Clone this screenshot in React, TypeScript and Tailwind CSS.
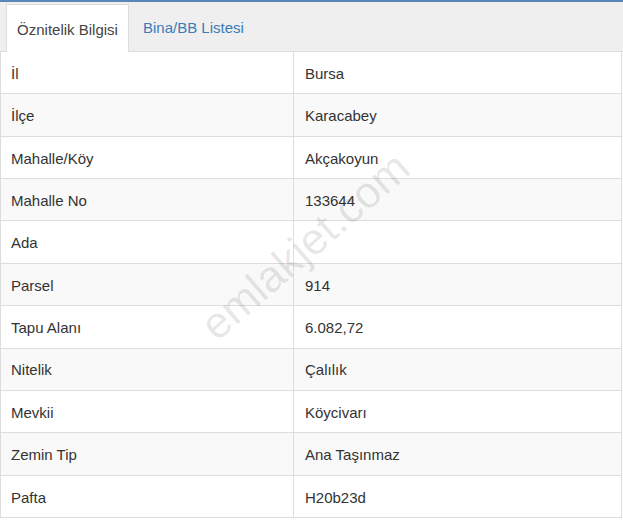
import React from 'react';

const rows: [string, string][] = [
  ['İl', 'Bursa'],
  ['İlçe', 'Karacabey'],
  ['Mahalle/Köy', 'Akçakoyun'],
  ['Mahalle No', '133644'],
  ['Ada', ''],
  ['Parsel', '914'],
  ['Tapu Alanı', '6.082,72'],
  ['Nitelik', 'Çalılık'],
  ['Mevkii', 'Köycivarı'],
  ['Zemin Tip', 'Ana Taşınmaz'],
  ['Pafta', 'H20b23d'],
];

export default function App() {
  return (
    <div className="relative w-[623px] h-[520px] bg-white text-[15px] text-[#333] overflow-hidden" style={{ fontFamily: '"Liberation Sans", Arial, sans-serif' }}>
      <div className="h-[2px] bg-[#5a86b8]" />
      {/* tabs */}
      <div className="flex h-[50px] items-end bg-[#efefef] pl-[6px] border-b border-[#ddd]">
        <div className="relative -mb-px flex h-[48px] w-[123px] items-center justify-center border border-b-0 border-[#ddd] bg-white pt-[3px] text-[#444]">
          Öznitelik Bilgisi
        </div>
        <div className="flex h-[48px] items-center px-[14px] pt-[3px] text-[#3a7cb8]">Bina/BB Listesi</div>
      </div>
      {/* table */}
      <div className="w-[622px] border-x border-[#ddd]">
        {rows.map(([k, v], i) => (
          <div key={k} className={`flex h-[42.36px] border-b border-[#ddd] pt-[3px] ${i % 2 === 1 ? 'bg-[#f9f9f9]' : 'bg-white'}`}>
            <div className="flex w-[293px] items-center border-r border-[#ddd] -mt-[3px] pt-[3px] pl-[10px]">{k}</div>
            <div className="flex flex-1 items-center pl-[11px]">{v}</div>
          </div>
        ))}
      </div>
      {/* watermark */}
      <div className="pointer-events-none absolute left-[305px] top-[246px] -translate-x-1/2 -translate-y-1/2 -rotate-[41deg] whitespace-nowrap text-[44px] text-black/10">
        emlakjet.com
      </div>
    </div>
  );
}
